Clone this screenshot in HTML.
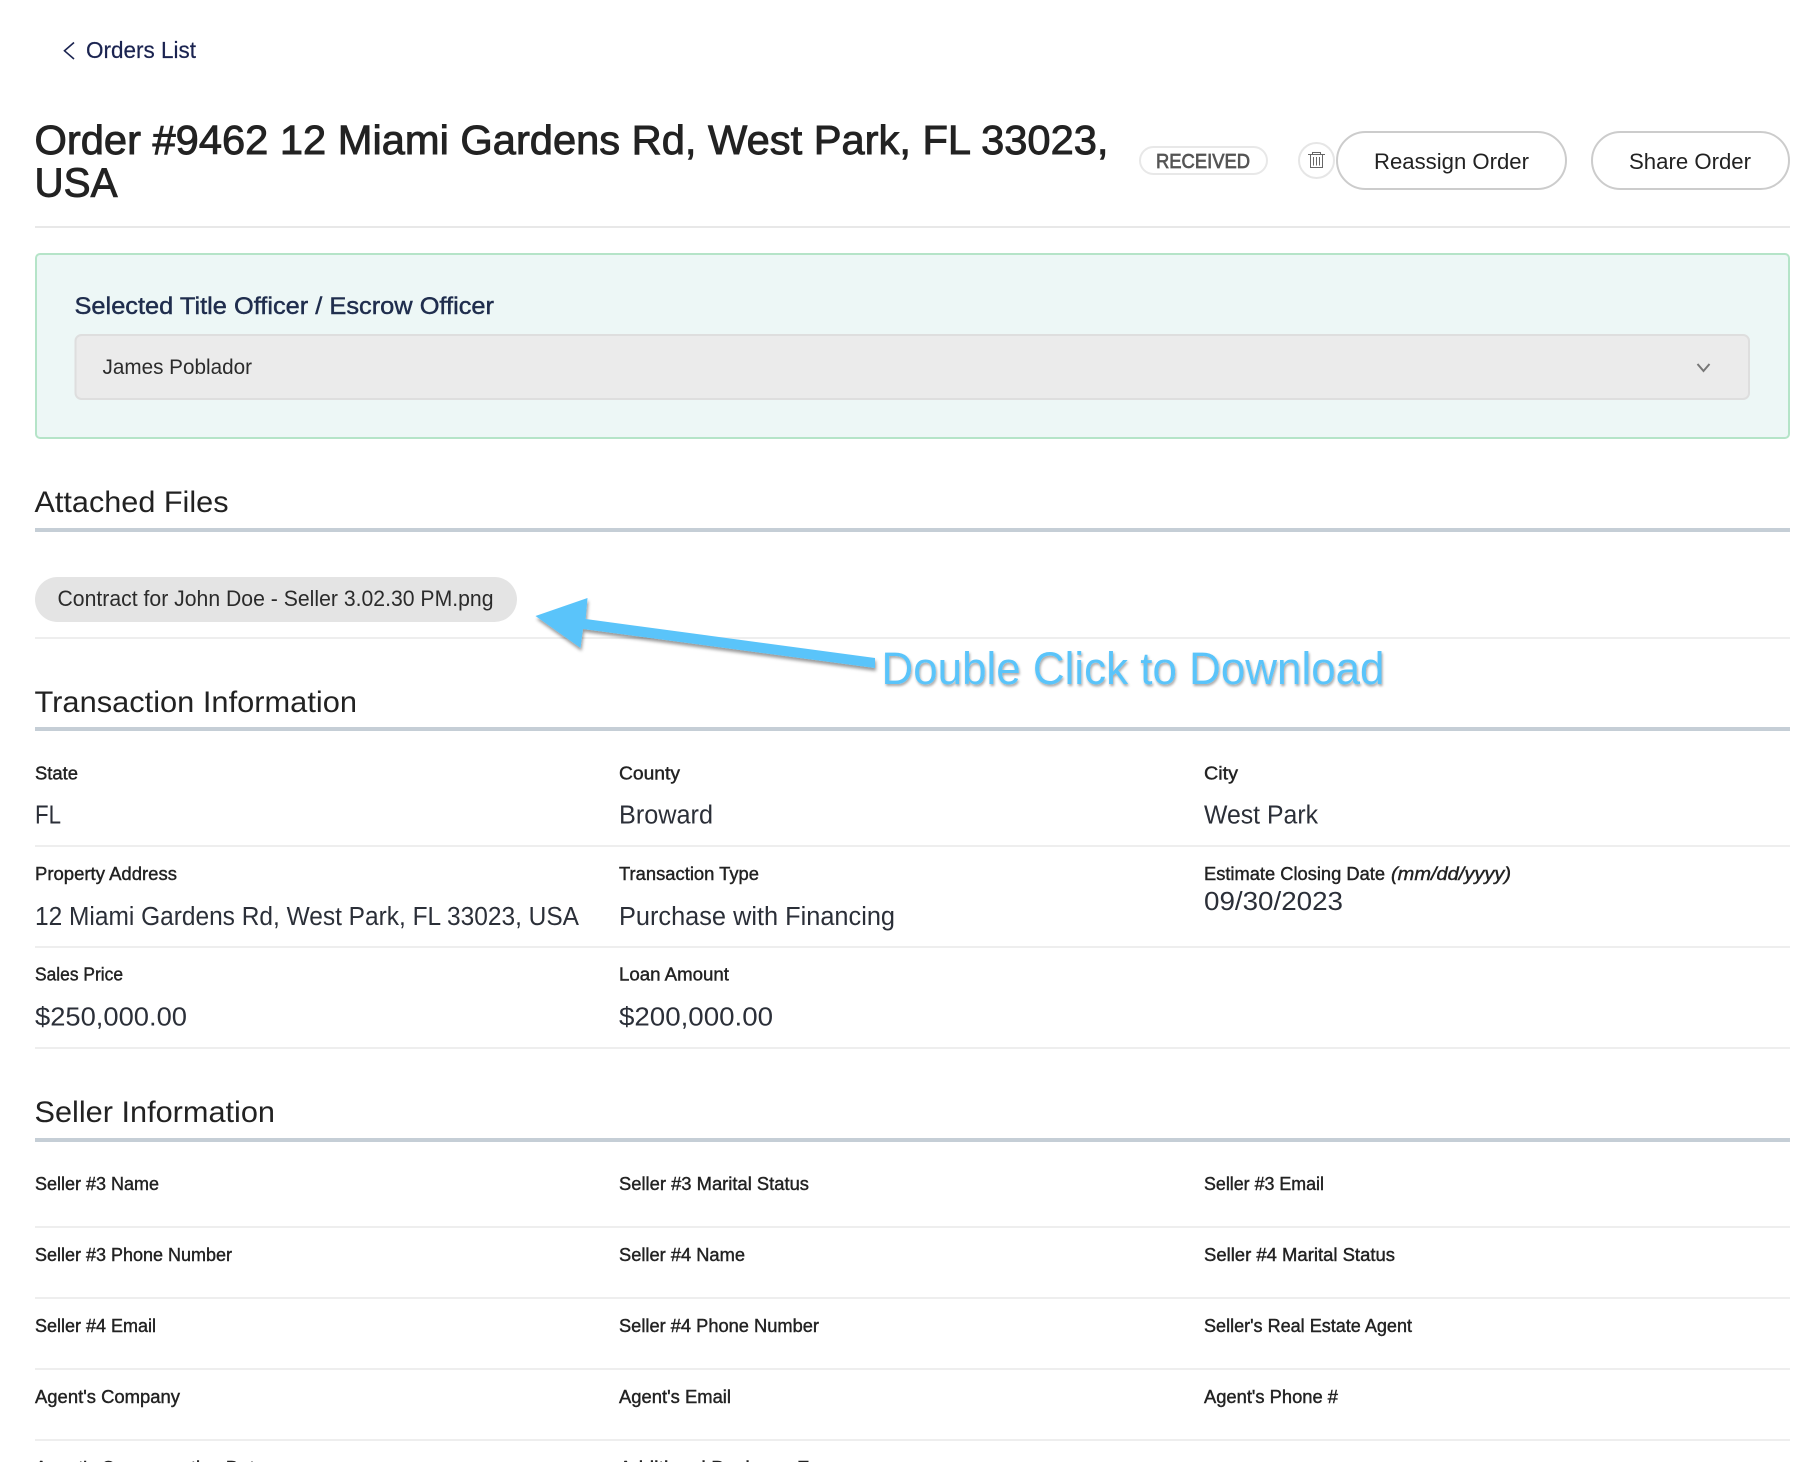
<!DOCTYPE html>
<html lang="en">
<head>
<meta charset="utf-8">
<title>Order #9462</title>
<style>
html,body{margin:0;padding:0;background:#fff;width:1810px;height:1462px;overflow:hidden}
svg{display:block;position:absolute;left:0;top:0}
text{font-family:"Liberation Sans",Arial,sans-serif;white-space:pre}
.l{font-size:18px;fill:#222;stroke:#222;stroke-width:.4px}
.v{font-size:25.5px;fill:#2b2f38}
.h{font-size:30px;fill:#222}
.t{font-size:41px;fill:#222;stroke:#222;stroke-width:.9px}
.b{font-size:22.5px;fill:#222}
</style>
</head>
<body>
<svg width="1810" height="1462" viewBox="0 0 1810 1462" xmlns="http://www.w3.org/2000/svg">
<defs>
<filter id="as" x="-10%" y="-30%" width="120%" height="170%"><feDropShadow dx="1" dy="3" stdDeviation="1.5" flood-color="#000" flood-opacity=".4"/></filter>
<filter id="ts" x="-5%" y="-30%" width="110%" height="170%"><feDropShadow dx="1" dy="2" stdDeviation="1.2" flood-color="#000" flood-opacity=".35"/></filter>
</defs>
<rect width="1810" height="1462" fill="#fff"/>

<!-- back link -->
<path d="M74 42.5 L64.5 50.8 L74 59" fill="none" stroke="#1a2350" stroke-width="1.6"/>
<text x="86" y="58" font-size="23" fill="#1a2350" stroke="#1a2350" stroke-width=".2" textLength="110" lengthAdjust="spacingAndGlyphs">Orders List</text>

<!-- title -->
<text class="t" x="34.5" y="154" textLength="1074" lengthAdjust="spacingAndGlyphs">Order #9462 12 Miami Gardens Rd, West Park, FL 33023,</text>
<text class="t" x="34.5" y="196.5" textLength="83" lengthAdjust="spacingAndGlyphs">USA</text>

<!-- badge -->
<rect x="1140" y="147" width="127" height="27" rx="13.5" fill="#fff" stroke="#e8e8e8" stroke-width="2"/>
<text x="1156" y="168" font-size="20" fill="#555" stroke="#555" stroke-width=".7" textLength="94" lengthAdjust="spacingAndGlyphs">RECEIVED</text>

<!-- trash -->
<circle cx="1316.5" cy="160.5" r="17.5" fill="#fff" stroke="#e6e6e6" stroke-width="2"/>
<g fill="none" stroke="#666" stroke-width="1">
<path d="M1308 154.5H1325M1312.5 154.5V152.5H1320.5V154.5"/>
<path d="M1310.5 154.5V167.5H1322.5V154.5"/>
<path d="M1313.5 157V165.5M1316.5 157V165.5M1319.5 157V165.5"/>
</g>

<!-- buttons -->
<rect x="1337" y="132" width="229" height="57" rx="28.5" fill="#fff" stroke="#ccc" stroke-width="2"/>
<text class="b" x="1374" y="169" textLength="155" lengthAdjust="spacingAndGlyphs">Reassign Order</text>
<rect x="1592" y="132" width="197" height="57" rx="28.5" fill="#fff" stroke="#ccc" stroke-width="2"/>
<text class="b" x="1629" y="169" textLength="122" lengthAdjust="spacingAndGlyphs">Share Order</text>

<rect x="35" y="226" width="1755" height="2" fill="#e8e8e8"/>

<!-- officer box -->
<rect x="36" y="254" width="1753" height="184" rx="4" fill="#edf7f6" stroke="#b5e4c8" stroke-width="2"/>
<text x="74.5" y="314" font-size="24.5" fill="#1f2d4d" stroke="#1f2d4d" stroke-width=".45" textLength="419.5" lengthAdjust="spacingAndGlyphs">Selected Title Officer / Escrow Officer</text>
<rect x="75.5" y="335" width="1673.5" height="64" rx="6" fill="#ebebeb" stroke="#dedede" stroke-width="2"/>
<text x="102.5" y="374" font-size="21.5" fill="#2b2b2b" textLength="149.5" lengthAdjust="spacingAndGlyphs">James Poblador</text>
<path d="M1697.5 364 L1703.5 371 L1709.5 364" fill="none" stroke="#777" stroke-width="2"/>

<!-- attached files -->
<text class="h" x="34.5" y="512" textLength="194" lengthAdjust="spacingAndGlyphs">Attached Files</text>
<rect x="35" y="528" width="1755" height="4" fill="#c5ced6"/>
<rect x="35" y="577" width="482" height="45" rx="22.5" fill="#e4e4e4"/>
<text x="57.5" y="606" font-size="22" fill="#2b2b2b" textLength="436" lengthAdjust="spacingAndGlyphs">Contract for John Doe - Seller 3.02.30 PM.png</text>
<rect x="35" y="637" width="1755" height="2" fill="#eeeeee"/>

<!-- transaction -->
<text class="h" x="34.5" y="712" textLength="322.5" lengthAdjust="spacingAndGlyphs">Transaction Information</text>
<rect x="35" y="727" width="1755" height="4" fill="#c5ced6"/>

<text class="l" x="35" y="779.5" textLength="43" lengthAdjust="spacingAndGlyphs">State</text>
<text class="l" x="619" y="779.5" textLength="61" lengthAdjust="spacingAndGlyphs">County</text>
<text class="l" x="1204" y="779.5" textLength="34" lengthAdjust="spacingAndGlyphs">City</text>
<text class="v" x="35" y="823.5" textLength="26" lengthAdjust="spacingAndGlyphs">FL</text>
<text class="v" x="619" y="823.5" textLength="94" lengthAdjust="spacingAndGlyphs">Broward</text>
<text class="v" x="1204" y="823.5" textLength="114" lengthAdjust="spacingAndGlyphs">West Park</text>
<rect x="35" y="845" width="1755" height="2" fill="#eeeeee"/>

<text class="l" x="35" y="880" textLength="142" lengthAdjust="spacingAndGlyphs">Property Address</text>
<text class="l" x="619" y="880" textLength="140" lengthAdjust="spacingAndGlyphs">Transaction Type</text>
<text class="l" x="1204" y="880" textLength="181" lengthAdjust="spacingAndGlyphs">Estimate Closing Date</text>
<text class="l" x="1391" y="880" font-style="italic" textLength="120" lengthAdjust="spacingAndGlyphs">(mm/dd/yyyy)</text>
<text class="v" x="35" y="925" textLength="544" lengthAdjust="spacingAndGlyphs">12 Miami Gardens Rd, West Park, FL 33023, USA</text>
<text class="v" x="619" y="925" textLength="276" lengthAdjust="spacingAndGlyphs">Purchase with Financing</text>
<text class="v" x="1204" y="910" textLength="139" lengthAdjust="spacingAndGlyphs">09/30/2023</text>
<rect x="35" y="946" width="1755" height="2" fill="#eeeeee"/>

<text class="l" x="35" y="980.5" textLength="88" lengthAdjust="spacingAndGlyphs">Sales Price</text>
<text class="l" x="619" y="980.5" textLength="110" lengthAdjust="spacingAndGlyphs">Loan Amount</text>
<text class="v" x="35" y="1025.5" textLength="152" lengthAdjust="spacingAndGlyphs">$250,000.00</text>
<text class="v" x="619" y="1025.5" textLength="154" lengthAdjust="spacingAndGlyphs">$200,000.00</text>
<rect x="35" y="1047" width="1755" height="2" fill="#eeeeee"/>

<!-- seller -->
<text class="h" x="34.5" y="1122" textLength="240.5" lengthAdjust="spacingAndGlyphs">Seller Information</text>
<rect x="35" y="1138" width="1755" height="4" fill="#c5ced6"/>

<text class="l" x="35" y="1190" textLength="124" lengthAdjust="spacingAndGlyphs">Seller #3 Name</text>
<text class="l" x="619" y="1190" textLength="190" lengthAdjust="spacingAndGlyphs">Seller #3 Marital Status</text>
<text class="l" x="1204" y="1190" textLength="120" lengthAdjust="spacingAndGlyphs">Seller #3 Email</text>
<rect x="35" y="1226" width="1755" height="2" fill="#eeeeee"/>

<text class="l" x="35" y="1261" textLength="197" lengthAdjust="spacingAndGlyphs">Seller #3 Phone Number</text>
<text class="l" x="619" y="1261" textLength="126" lengthAdjust="spacingAndGlyphs">Seller #4 Name</text>
<text class="l" x="1204" y="1261" textLength="191" lengthAdjust="spacingAndGlyphs">Seller #4 Marital Status</text>
<rect x="35" y="1297" width="1755" height="2" fill="#eeeeee"/>

<text class="l" x="35" y="1332" textLength="121" lengthAdjust="spacingAndGlyphs">Seller #4 Email</text>
<text class="l" x="619" y="1332" textLength="200" lengthAdjust="spacingAndGlyphs">Seller #4 Phone Number</text>
<text class="l" x="1204" y="1332" textLength="208" lengthAdjust="spacingAndGlyphs">Seller's Real Estate Agent</text>
<rect x="35" y="1368" width="1755" height="2" fill="#eeeeee"/>

<text class="l" x="35" y="1403" textLength="145" lengthAdjust="spacingAndGlyphs">Agent's Company</text>
<text class="l" x="619" y="1403" textLength="112" lengthAdjust="spacingAndGlyphs">Agent's Email</text>
<text class="l" x="1204" y="1403" textLength="134" lengthAdjust="spacingAndGlyphs">Agent's Phone #</text>
<rect x="35" y="1439" width="1755" height="2" fill="#eeeeee"/>

<text class="l" x="35" y="1474" textLength="230" lengthAdjust="spacingAndGlyphs">Agent's Compensation Date</text>
<text class="l" x="619" y="1474" textLength="212" lengthAdjust="spacingAndGlyphs">Additional Business Fee</text>

<!-- annotation -->
<polygon points="535.5,616 587.5,598 585.7,619 875,658 875,668 583,629 580.5,648" fill="#5ac4fa" filter="url(#as)"/>
<text x="881.5" y="684" font-size="45" fill="#5ac4fa" filter="url(#ts)" textLength="503" lengthAdjust="spacingAndGlyphs">Double Click to Download</text>
</svg>
</body>
</html>
